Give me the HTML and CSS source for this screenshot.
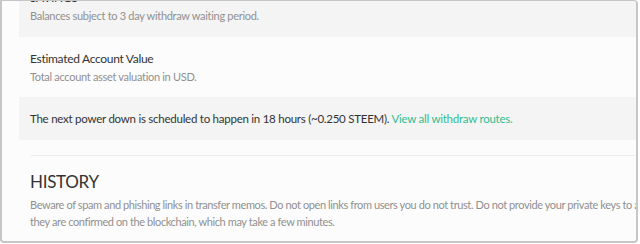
FILE: index.html
```html
<!DOCTYPE html>
<html lang="en">
<head>
    <meta charset="UTF-8">
    <meta name="viewport" content="width=device-width, initial-scale=1.0">
    <title>Wallet</title>
    <link rel="stylesheet" href="styles.css">
</head>
<body>
    <div class="frame">
        <div class="wallet">
            <div class="row shaded first">
                <div class="row-title">SAVINGS</div>
                <div class="row-desc">Balances subject to 3 day withdraw waiting period.</div>
            </div>

            <div class="row plain">
                <div class="row-title">Estimated Account Value</div>
                <div class="row-desc">Total account asset valuation in USD.</div>
            </div>

            <div class="row shaded notice">
                The next power down is scheduled to happen in 18 hours (~0.250 STEEM).
                <a href="#">View all withdraw routes.</a>
            </div>

            <hr class="divider">

            <div class="history">
                <h2>HISTORY</h2>
                <p class="warning">Beware of spam and phishing links in transfer memos. Do not open links from users you do not trust. Do not provide your private keys to any third party websites. Transactions will not show until<br>they are confirmed on the blockchain, which may take a few minutes.</p>
            </div>
        </div>
    </div>
</body>
</html>
```

FILE: styles.css
```css
body {
    margin: 0;
    background-color: #fff;
    font-family: Lato, "Open Sans", sans-serif;
    color: #333;
}

.frame {
    box-sizing: border-box;
    width: 638px;
    height: 243px;
    border: 2px solid #c6c6c6;
    border-top-width: 1px;
    border-radius: 0 4px 4px 4px;
    background-color: #fcfcfc;
    overflow: hidden;
}

.wallet {
    width: 1000px;
    margin-top: -24px;
    padding-left: 17px;
}

.row {
    padding: 13px 11px 11px;
}

.row.shaded {
    background-color: #f4f4f4;
}

.row.first {
    padding-top: 12px;
    padding-bottom: 12px;
}

.row-title {
    font-size: 12px;
    line-height: 18px;
    letter-spacing: -0.3px;
}

.row-desc {
    font-size: 11px;
    line-height: 18px;
    letter-spacing: -0.3px;
    color: #909090;
}

.notice {
    font-size: 11.5px;
    line-height: 18px;
    letter-spacing: -0.25px;
    padding-bottom: 12px;
}

.notice a {
    color: #2fbd93;
    text-decoration: none;
}

.divider {
    border: none;
    border-top: 1px solid #efefef;
    margin: 15px 0 0 11px;
}

.history {
    padding-left: 11px;
}

.history h2 {
    margin: 14px 0 2px;
    font-size: 17px;
    line-height: 24px;
    letter-spacing: -0.3px;
    font-weight: normal;
}

.warning {
    margin: 0;
    font-size: 11px;
    line-height: 17px;
    letter-spacing: -0.4px;
    color: #909090;
    white-space: nowrap;
}
```
